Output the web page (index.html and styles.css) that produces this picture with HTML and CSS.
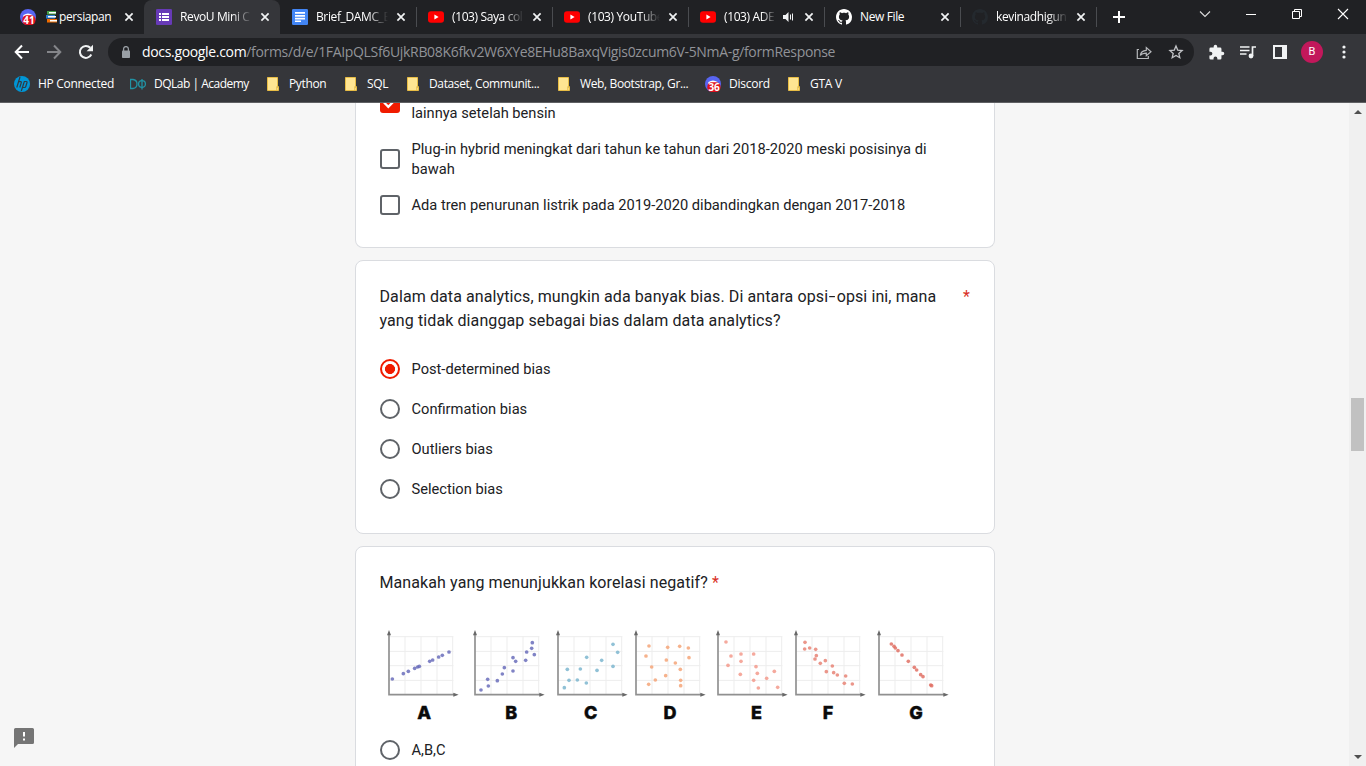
FILE: index.html
```html
<!DOCTYPE html>
<html lang="id">
<head>
<meta charset="utf-8">
<title>RevoU Mini Course</title>
<link rel="stylesheet" href="styles.css">
</head>
<body>
<svg class="defs" width="0" height="0">
  <defs>
    <symbol id="x" viewBox="0 0 10 10"><path d="M1.4 1.4l7.2 7.2M8.6 1.4L1.4 8.6" stroke="#f1f3f4" stroke-width="1.7" fill="none"/></symbol>
    <symbol id="yt" viewBox="0 0 16 16"><rect y="2.3" width="16" height="11.4" rx="3" fill="#f00"/><path d="M6.4 5.5v5l4.2-2.5z" fill="#fff"/></symbol>
    <symbol id="gh" viewBox="0 0 16 16"><path d="M8 0C3.58 0 0 3.58 0 8c0 3.54 2.29 6.53 5.47 7.59.4.07.55-.17.55-.38 0-.19-.01-.82-.01-1.49-2.01.37-2.53-.49-2.69-.94-.09-.23-.48-.94-.82-1.13-.28-.15-.68-.52-.01-.53.63-.01 1.08.58 1.23.82.72 1.21 1.87.87 2.33.66.07-.52.28-.87.51-1.07-1.78-.2-3.64-.89-3.64-3.95 0-.87.31-1.59.82-2.15-.08-.2-.36-1.02.08-2.12 0 0 .67-.21 2.2.82.64-.18 1.32-.27 2-.27s1.36.09 2 .27c1.53-1.04 2.2-.82 2.2-.82.44 1.1.16 1.92.08 2.12.51.56.82 1.27.82 2.15 0 3.07-1.87 3.75-3.65 3.95.29.25.54.73.54 1.48 0 1.07-.01 1.93-.01 2.2 0 .21.15.46.55.38A8.01 8.01 0 0 0 16 8c0-4.42-3.58-8-8-8z"/></symbol>
    <symbol id="folder" viewBox="0 0 16 16"><path d="M2.500 1.500h10v10h1v3h-11z" fill="#ffe592"/><path d="M2.500 1.500h10v9.500M2.500 1.500v13h11v-4h-1.700v3.800" fill="none" stroke="#e8bd45"/></symbol>
    <symbol id="discord" viewBox="0 0 16 16"><circle cx="8" cy="8" r="8" fill="#5865f2"/><path d="M3.500 6Q8 2.800 12.500 6L13 8H3z" fill="#fff"/><rect x="2.300" y="6.200" width="13.200" height="9.800" rx="4.500" fill="#e0101c"/></symbol>
    <symbol id="plot" viewBox="0 0 220 200" overflow="visible"><path d="M3 18H196M3 62H196M3 105H196M3 149H196M51 18V190M99 18V190M147 18V190M194 18V190" stroke="#ededed" stroke-width="3" fill="none"/><path d="M3 8V192H200" fill="none" stroke="#909090" stroke-width="5"/><path d="M-3 14L3-2l6 16zM196 186l16 6-16 6z" fill="#686868"/></symbol>
  </defs>
</svg>

<header class="browser">
  <div class="tabs">
    <div class="tab first">
      <span class="icon badge-icon"><svg width="16" height="16"><use href="#discord"/></svg><b>41</b></span>
      <svg class="books" width="12" height="12" viewBox="0 0 12 12"><path d="M1 0h9v3.500H1z" fill="#43a047"/><path d="M0 4h9v3.500H0z" fill="#2d7dd2"/><path d="M1 8h10v3.500H1z" fill="#ef6c00"/><path d="M3 1.700h7M2 5.700h8M4 9.700h7" stroke="#fff" stroke-width="1.600"/></svg>
      <span class="title">persiapan</span><svg class="close"><use href="#x"/></svg>
    </div>
    <div class="tab active">
      <svg class="icon" viewBox="0 0 16 16"><rect width="16" height="16" rx="1.300" fill="#673ab7"/><path d="M3 4h2v2H3zM6 4h7v2H6zM3 7h2v2H3zM6 7h7v2H6zM3 10h2v2H3zM6 10h7v2H6z" fill="#fff"/></svg>
      <span class="title fade">RevoU Mini C</span><svg class="close"><use href="#x"/></svg>
    </div>
    <div class="tab">
      <svg class="icon" viewBox="0 0 16 16"><rect width="16" height="16" rx="1.300" fill="#4285f4"/><path d="M3 3h10v1.700H3zM3 6h10v1.700H3zM3 8.800h10v1.700H3zM3 11.500h6V13H3z" fill="#fff"/></svg>
      <span class="title fade">Brief_DAMC_B</span><svg class="close"><use href="#x"/></svg>
    </div>
    <div class="tab line"><svg class="icon"><use href="#yt"/></svg><span class="title fade">(103) Saya col</span><svg class="close"><use href="#x"/></svg></div>
    <div class="tab line"><svg class="icon"><use href="#yt"/></svg><span class="title fade">(103) YouTube</span><svg class="close"><use href="#x"/></svg></div>
    <div class="tab line"><svg class="icon"><use href="#yt"/></svg><span class="title fade narrow">(103) ADE</span>
      <svg class="sound" width="12" height="12" viewBox="0 0 12 12"><path d="M1 4h2.500L6.500 1v10L3.500 8H1z" fill="#f1f3f4"/><path d="M8.500 3.500v5M10.500 2.500v7" stroke="#f1f3f4" fill="none"/></svg>
      <svg class="close"><use href="#x"/></svg></div>
    <div class="tab line"><svg class="icon" fill="#fff"><use href="#gh"/></svg><span class="title">New File</span><svg class="close"><use href="#x"/></svg></div>
    <div class="tab line"><svg class="icon" fill="#24292e"><use href="#gh"/></svg><span class="title fade">kevinadhigun</span><svg class="close"><use href="#x"/></svg></div>
    <div class="newtab line"><svg width="12" height="12" viewBox="0 0 12 12"><path d="M6 0v12M0 6h12" stroke="#fff" stroke-width="2"/></svg></div>
    <div class="window">
      <svg width="12" height="12" viewBox="0 0 12 12"><path d="M1 3.500l5 5 5-5" fill="none" stroke="#ddd" stroke-width="1.100"/></svg>
      <svg width="12" height="12" viewBox="0 0 12 12"><path d="M1 6.500h10" stroke="#fff"/></svg>
      <svg width="12" height="12" viewBox="0 0 12 12"><path d="M1.500 3.500h7v7h-7zM3.500 3.500v-2h7v7h-2" fill="none" stroke="#fff"/></svg>
      <svg width="12" height="12" viewBox="0 0 12 12"><path d="M1 1l10 10M11 1L1 11" stroke="#fff" stroke-width="1.100"/></svg>
    </div>
  </div>

  <div class="toolbar">
    <div class="tool"><svg width="16" height="16" viewBox="0 0 16 16"><path d="M15 8H2M8 1.500L1.700 8 8 14.500" fill="none" stroke="#fff" stroke-width="2"/></svg></div>
    <div class="tool"><svg width="16" height="16" viewBox="0 0 16 16"><path d="M1 8h13M8 1.500L14.300 8 8 14.500" fill="none" stroke="#85868a" stroke-width="2"/></svg></div>
    <div class="tool"><svg width="16" height="16" viewBox="0 0 16 16"><path d="M13.300 10.500A6 6 0 1 1 12.300 3.800" fill="none" stroke="#f1f3f4" stroke-width="2"/><path d="M15 .8v6.400H8.600z" fill="#f1f3f4"/></svg></div>
    <div class="omnibox">
      <svg class="lock" width="10" height="12" viewBox="0 0 10 12"><rect x="1" y="4.500" width="8" height="7.500" rx=".8" fill="#9aa0a6"/><path d="M2.600 5V3a2.400 2.400 0 0 1 4.800 0v2" fill="none" stroke="#9aa0a6" stroke-width="1.300"/></svg>
      <div class="url"><span class="host">docs.google.com</span><span class="path">/forms/d/e/1FAIpQLSf6UjkRB08K6fkv2W6XYe8EHu8BaxqVigis0zcum6V-5NmA-g/formResponse</span></div>
      <div class="tool"><svg width="16" height="16" viewBox="0 0 16 16"><path d="M3 5.500H1.300v9h11V12M4.300 11.500c.5-3.500 2.700-5 6-5.200V3.500L15 7.700l-4.700 4V9.200c-3 0-4.800.7-6 2.300z" fill="none" stroke="#b6b8bb" stroke-width="1.200"/></svg></div>
      <div class="tool"><svg width="16" height="16" viewBox="0 0 16 16"><path d="M8 2l1.700 4.100 4.400.4-3.300 2.900 1 4.300L8 11.400l-3.800 2.300 1-4.300-3.300-2.900 4.400-.4z" fill="none" stroke="#c2c4c7" stroke-width="1.300"/></svg></div>
    </div>
    <div class="tool"><svg width="17" height="17" viewBox="0 0 24 24"><path d="M20.500 11H19V7a2 2 0 0 0-2-2h-4V3.500a2.500 2.500 0 0 0-5 0V5H4a2 2 0 0 0-2 2v3.800h1.500a2.700 2.700 0 0 1 0 5.400H2V20a2 2 0 0 0 2 2h3.800v-1.500a2.700 2.700 0 0 1 5.400 0V22H17a2 2 0 0 0 2-2v-4h1.500a2.500 2.500 0 0 0 0-5z" fill="#f1f3f4"/></svg></div>
    <div class="tool"><svg width="16" height="14" viewBox="0 0 16 14"><path d="M0 2h9.500M0 5.500h9.500M0 9h6.500M12.500 11V2h3.500" fill="none" stroke="#f1f3f4" stroke-width="1.700"/><circle cx="11" cy="11" r="2.400" fill="#f1f3f4"/></svg></div>
    <div class="tool"><svg width="14" height="14" viewBox="0 0 14 14"><path d="M0 0h14v14H0zM2 2v10h7V2z" fill="#f1f3f4" fill-rule="evenodd"/></svg></div>
    <div class="tool"><span class="avatar">B</span></div>
    <div class="tool"><svg width="4" height="14" viewBox="0 0 4 14"><circle cx="2" cy="2" r="1.600" fill="#f1f3f4"/><circle cx="2" cy="7" r="1.600" fill="#f1f3f4"/><circle cx="2" cy="12" r="1.600" fill="#f1f3f4"/></svg></div>
  </div>

  <nav class="bookmarks">
    <a class="bm hp"><svg class="icon" viewBox="0 0 16 16"><circle cx="8" cy="8" r="8" fill="#0096d6"/><path d="M6 1L2.800 11.500M4.600 5.700h2.200q.8 0 .5 1L5.800 11.500M7.300 15L10.300 5.500h2q1 0 .7 1l-1.200 4q-.3 1-1.200 1H9" fill="none" stroke="#303a42" stroke-width="1.200"/></svg><span>HP Connected</span></a>
    <a class="bm dq"><svg class="icon" viewBox="0 0 16 16"><path d="M.5 3.500H3Q7 4 7 8t-4 4.500H.5zM12 3v10.500" fill="none" stroke="#2193a5" stroke-width="1.300"/><ellipse cx="12" cy="8" rx="3.400" ry="3.300" fill="none" stroke="#2193a5" stroke-width="1.300"/></svg><span>DQLab | Academy</span></a>
    <a class="bm py"><svg class="icon"><use href="#folder"/></svg><span>Python</span></a>
    <a class="bm sql"><svg class="icon"><use href="#folder"/></svg><span>SQL</span></a>
    <a class="bm data"><svg class="icon"><use href="#folder"/></svg><span>Dataset, Communit...</span></a>
    <a class="bm web"><svg class="icon"><use href="#folder"/></svg><span>Web, Bootstrap, Gr...</span></a>
    <a class="bm dc"><span class="icon badge-icon"><svg width="16" height="16"><use href="#discord"/></svg><b>36</b></span><span>Discord</span></a>
    <a class="bm"><svg class="icon"><use href="#folder"/></svg><span>GTA V</span></a>
  </nav>
</header>

<div class="viewport">
  <main class="form">
    <section class="card clipped">
      <div class="choice two"><span class="box checked"><svg width="20" height="20" viewBox="0 0 20 20"><path d="M4 9.500l4.300 4.300L16 6" fill="none" stroke="#fff" stroke-width="2.300"/></svg></span><span class="label second">lainnya setelah bensin</span></div>
      <div class="choice two"><span class="box"></span><span class="label">Plug-in hybrid meningkat dari tahun ke tahun dari 2018-2020 meski posisinya di bawah</span></div>
      <div class="choice one"><span class="box"></span><span class="label">Ada tren penurunan listrik pada 2019-2020 dibandingkan dengan 2017-2018</span></div>
    </section>

    <section class="card">
      <div class="question"><h2>Dalam data analytics, mungkin ada banyak bias. Di antara opsi<span class="hyphen">-</span>opsi ini, mana yang tidak dianggap sebagai bias dalam data analytics?</h2><span class="required">*</span></div>
      <div class="choices">
        <div class="choice"><span class="radio on"></span><span class="label">Post-determined bias</span></div>
        <div class="choice"><span class="radio"></span><span class="label">Confirmation bias</span></div>
        <div class="choice"><span class="radio"></span><span class="label">Outliers bias</span></div>
        <div class="choice"><span class="radio"></span><span class="label">Selection bias</span></div>
      </div>
    </section>

    <section class="card">
      <div class="question"><h2>Manakah yang menunjukkan korelasi negatif? <span class="required">*</span></h2></div>
      <svg class="charts" id="charts" width="578" height="104" viewBox="379 622 578 104"></svg>
      <div class="choice"><span class="radio"></span><span class="label">A,B,C</span></div>
    </section>
  </main>
  <svg class="report" width="20" height="20" viewBox="0 0 20 20"><path d="M1.500 0h17Q20 0 20 1.500v13q0 1.500-1.500 1.500H4l-4 4V1.500Q0 0 1.500 0z" fill="#757575"/><path d="M9 4h2v4.500H9zM9 10.500h2v2H9z" fill="#fff"/></svg>
  <div class="scrollbar">
    <svg width="8" height="4" viewBox="0 0 8 4"><path d="M0 4l4-4 4 4z" fill="#505050"/></svg>
    <div class="thumb"></div>
    <svg class="down" width="8" height="4" viewBox="0 0 8 4"><path d="M0 0h8L4 4z" fill="#505050"/></svg>
  </div>
</div>
<script src="charts.js"></script>
</body>
</html>
```
FILE: charts.js
```js
// Each plot: left edge of its frame, label centre, dot colour, and dots in thirds of a pixel.
const plots = [
  { name: 'A', x: 388, label: 424.3, color: '#6a6dbb', dots: [[13,145],[46,129],[61,122],[80,113],[89,109],[94,107],[125,92],[134,88],[152,79],[163,74],[183,64]] },
  { name: 'B', x: 474, label: 511.3, color: '#6a6dbb', dots: [[21,178],[43,166],[41,146],[70,150],[85,130],[91,111],[117,121],[125,92],[117,81],[155,89],[158,64],[173,53],[175,36],[181,72]] },
  { name: 'C', x: 557, label: 590.6, color: '#7db6cf', dots: [[22,171],[36,149],[61,148],[88,157],[31,116],[70,115],[89,80],[120,119],[134,89],[168,107],[182,65],[168,41]] },
  { name: 'D', x: 635, label: 670, color: '#f4a478', dots: [[42,46],[98,50],[134,47],[160,52],[33,76],[162,81],[94,88],[121,97],[50,109],[136,116],[92,135],[61,148],[41,161],[137,149],[137,165]] },
  { name: 'E', x: 717, label: 756.5, color: '#f39a8c', dots: [[27,34],[42,76],[72,70],[72,92],[110,70],[33,104],[117,108],[70,131],[121,128],[110,149],[149,143],[172,122],[124,172],[182,170]] },
  { name: 'F', x: 795, label: 828, color: '#e88476', dots: [[30,35],[29,55],[44,52],[62,56],[64,75],[60,85],[76,98],[91,90],[112,106],[94,123],[116,126],[127,133],[152,136],[148,158],[172,160]] },
  { name: 'G', x: 878, label: 916, color: '#e07165', dots: [[40,40],[48,47],[52,52],[60,60],[72,73],[91,92],[109,110],[116,118],[128,132],[135,138],[158,163],[161,165]] }
];

document.getElementById('charts').innerHTML = plots.map(p => `
  <g transform="translate(${p.x} 630.700) scale(.3333)">
    <use href="#plot" width="220" height="200"/>
    ${p.dots.map(([x, y]) => `<circle cx="${x}" cy="${y}" r="5.500" fill="${p.color}" opacity=".85"/>`).join('')}
  </g>
  <text x="${p.label}" y="718.500" text-anchor="middle">${p.name}</text>`).join('');
```
FILE: styles.css
```css
* { box-sizing: border-box; }
body { margin: 0; width: 1366px; height: 766px; overflow: hidden; display: flex; flex-direction: column; background: #f6f6f6; font-family: Roboto, sans-serif; }
svg { display: block; flex: none; }
.defs { position: absolute; }

.browser { height: 103px; flex: none; background: #35363a; border-bottom: 1px solid #5f6063; font-family: "Open Sans", "Noto Sans", sans-serif; font-size: 12px; color: #fff; }
.tabs { height: 34px; display: flex; background: #202124; padding-left: 8px; }
.tab { width: 136px; height: 34px; display: flex; align-items: center; padding-left: 12px; flex: none; }
.tab.active { background: #35363a; border-radius: 8px 8px 0 0; }
.line { background: linear-gradient(#4a4c50, #4a4c50) 0 7px / 1px 20px no-repeat; }
.icon { width: 16px; height: 16px; flex: none; }
.title { width: 72px; margin-left: 8px; white-space: nowrap; letter-spacing: -.38px; line-height: 20px; }
.fade { -webkit-mask-image: linear-gradient(90deg, #000 72%, transparent); mask-image: linear-gradient(90deg, #000 72%, transparent); }
.narrow { width: 52px; }
.sound { margin-left: 6px; margin-right: 2px; }
.books { margin-left: 10px; }
.first .title { width: 57px; margin-left: 1px; }
.close { width: 10px; height: 10px; margin-left: 8px; }
.badge-icon { position: relative; display: block; }
.badge-icon b { position: absolute; left: 2px; top: 6px; width: 14px; text-align: center; font: bold 10px/10px "Open Sans", sans-serif; color: #fff; }
.newtab { width: 46px; padding: 11px 0 0 17px; }
.window { margin-left: auto; display: flex; gap: 34px; padding: 8px 17px 0 0; }

.toolbar { height: 36px; display: flex; align-items: center; padding-left: 6px; }
.tool { width: 32px; display: flex; justify-content: center; align-items: center; flex: none; }
.omnibox { width: 1086px; height: 28px; border-radius: 14px; background: #202124; margin: 0 6px; display: flex; align-items: center; padding: 0 2px 0 13px; flex: none; }
.url { flex: 1; margin-left: 11px; white-space: nowrap; font-size: 14px; line-height: 20px; color: #919398; letter-spacing: -.33px; }
.host { color: #fff; }
.avatar { width: 22px; height: 22px; border-radius: 50%; background: #c2185b; font: 11px/22px Roboto, sans-serif; text-align: center; }

.bookmarks { height: 28px; display: flex; align-items: center; padding-left: 14px; }
.bm { display: flex; align-items: center; gap: 8px; white-space: nowrap; letter-spacing: -.37px; }
.bm > span:last-child { padding-bottom: 2px; }
.bm.hp { width: 116px; letter-spacing: -.3px; }
.bm.dq { width: 135px; letter-spacing: -.5px; }
.py { width: 78px; }
.sql { width: 62px; }
.data { width: 151px; }
.web { width: 149px; }
.dc { width: 81px; }
.dc, .dc + .bm { letter-spacing: -.25px; }

.viewport { flex: 1; min-height: 0; overflow: hidden; position: relative; padding-left: 355px; display: flex; justify-content: space-between; }
.form { width: 640px; display: flex; flex-direction: column; gap: 12px; margin-top: -28px; }
.card { flex: none; background: #fff; border: 1px solid #dadce0; border-radius: 8px; padding: 24px 24px 24px; color: #202124; }
.clipped { border-top: 0; border-radius: 0 0 8px 8px; padding-top: 0; }
.question { display: flex; justify-content: space-between; }
.question h2 { margin: 0 0 0 -.5px; width: 562px; font-size: 16px; font-weight: 400; line-height: 24px; letter-spacing: .1px; }
.hyphen { display: inline-block; transform: scaleX(1.5); margin: 0 2px; }
.required { color: #d93025; font-size: 16px; line-height: 24px; }
.card .question > .required { width: 7px; }
.choices { padding-top: 16px; }
.choice { height: 40px; display: flex; align-items: center; gap: 11.500px; font-size: 14.67px; line-height: 20px; }
.choice.two { height: 56px; }
.choice.one { height: 36px; }
.label { max-width: 532px; }
.second { padding-top: 20px; }
.box { width: 20px; height: 20px; border: 2px solid #5f6368; border-radius: 3px; flex: none; }
.checked { border: 0; background: #f01b00; }
.radio { width: 20px; height: 20px; border: 2px solid #5f6368; border-radius: 50%; flex: none; }
.radio.on { border-color: #f01b00; background: radial-gradient(circle, #f01b00 4.700px, #fff 5.300px); }
.charts { margin: 27px 0 4px -1px; font: 800 18px Inter, sans-serif; fill: #0a0a0a; }
.charts text { stroke: #0a0a0a; stroke-width: .4px; }
.report { position: absolute; left: 14px; bottom: 18px; }
.scrollbar { width: 17px; background: #f0f0f0; display: flex; flex-direction: column; align-items: center; padding: 7px 0; }
.thumb { width: 13px; height: 53px; margin-top: 284px; background: #c1c1c1; }
.down { margin-top: auto; }
```
